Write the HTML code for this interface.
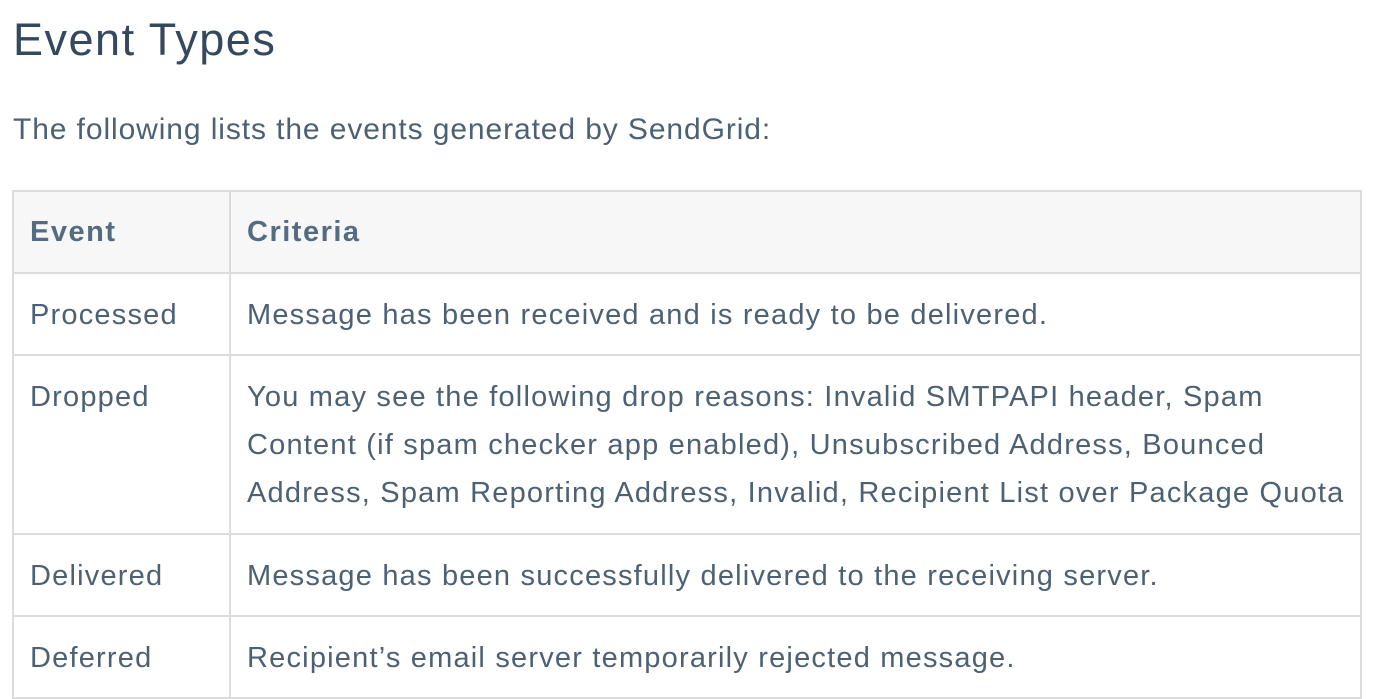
<!DOCTYPE html>
<html><head><style>
body{margin:0;background:#fff;font-family:"Liberation Sans",sans-serif;color:#4d6174;width:1374px;height:662px;overflow:hidden}
h1{position:absolute;left:13px;top:12px;margin:0;font-weight:normal;font-size:45px;color:#34495e;line-height:56px;letter-spacing:1.5px}
p{position:absolute;left:13px;top:110px;margin:0;font-size:30px;line-height:40px;color:#4d6174;letter-spacing:0.9px}
table{position:absolute;left:12px;top:190px;border-collapse:collapse;width:1350px;table-layout:fixed}
td,th{border:2px solid #dcdcdc;padding:0 16px;font-size:29px;line-height:48px;text-align:left;vertical-align:top;letter-spacing:1.2px;white-space:nowrap;overflow:visible}
th{background:#f7f7f7;color:#546b81;font-weight:bold;height:80px;vertical-align:middle;letter-spacing:1.5px;padding-top:0}
td{padding-top:17px;padding-bottom:15px}
</style></head><body>
<h1>Event Types</h1>
<p>The following lists the events generated by SendGrid:</p>
<table>
<colgroup><col style="width:217px"><col></colgroup>
<tr><th>Event</th><th>Criteria</th></tr>
<tr><td>Processed</td><td>Message has been received and is ready to be delivered.</td></tr>
<tr><td>Dropped</td><td style="padding-bottom:16px">You may see the following drop reasons: Invalid SMTPAPI header, Spam<br>Content (if spam checker app enabled), Unsubscribed Address, Bounced<br>Address, Spam Reporting Address, Invalid, Recipient List over Package Quota</td></tr>
<tr><td>Delivered</td><td>Message has been successfully delivered to the receiving server.</td></tr>
<tr><td>Deferred</td><td>Recipient’s email server temporarily rejected message.</td></tr>
</table>
</body></html>
